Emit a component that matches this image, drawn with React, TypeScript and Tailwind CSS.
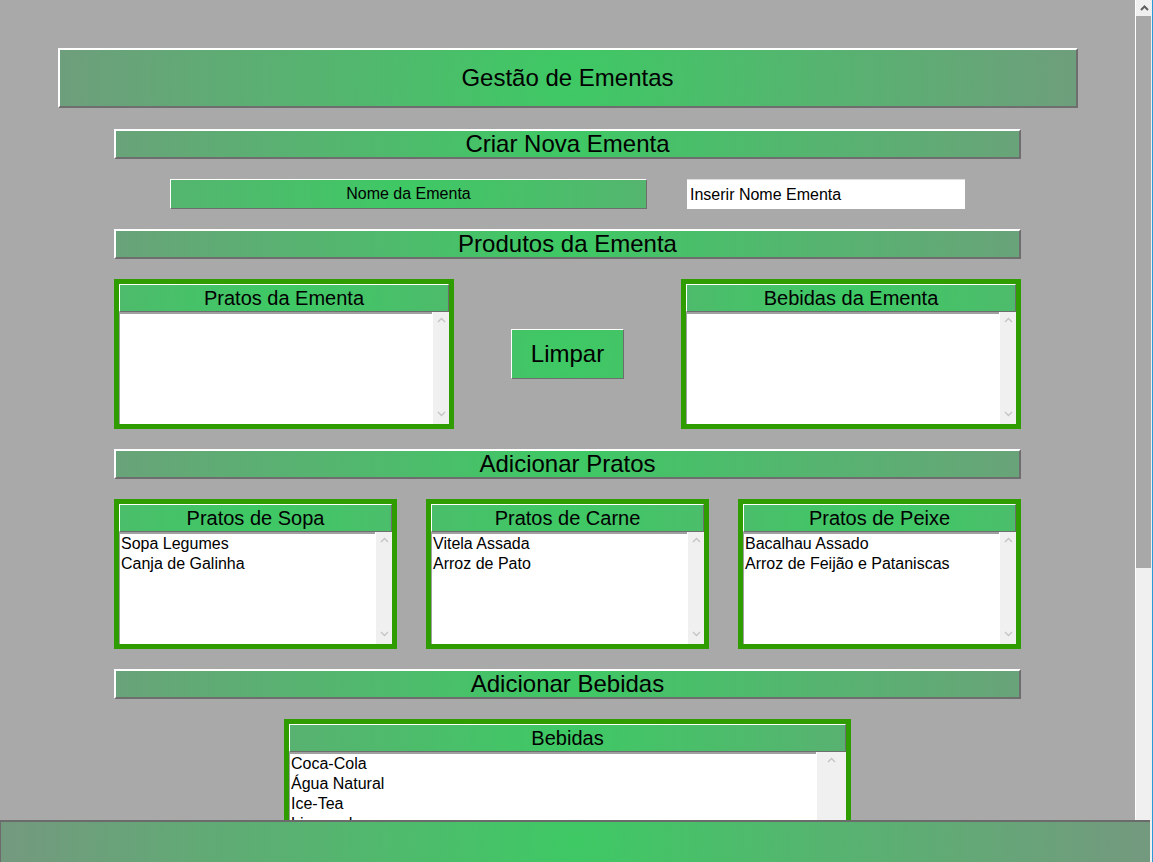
import React from "react";

const GRAD = "bg-[image:radial-gradient(circle_at_center,#3ec964_0px,#739a7e_560px)]";
const OUT2 = "border-2 border-t-white border-l-white border-r-[#6e6e6e] border-b-[#6e6e6e]";
const OUT1 = "border border-t-white border-l-white border-r-[#6e6e6e] border-b-[#6e6e6e]";

function Chevron({ up, color, sw }: { up: boolean; color: string; sw: number }) {
  return (
    <svg width="9" height="6" viewBox="0 0 9 6">
      <polyline
        points={up ? "1,5 4.5,1.5 8,5" : "1,1 4.5,4.5 8,1"}
        fill="none"
        stroke={color}
        strokeWidth={sw}
      />
    </svg>
  );
}

function SectionHeader({ children }: { children: React.ReactNode }) {
  return (
    <div className={`w-[907px] h-[30px] shrink-0 ${GRAD} ${OUT2} flex items-center justify-center text-[24px] text-black`}>
      {children}
    </div>
  );
}

function ListBox({
  title,
  items,
  widthClass,
  barClass = "w-[17px]",
}: {
  title: string;
  items: string[];
  widthClass: string;
  barClass?: string;
}) {
  return (
    <div className={`${widthClass} h-[150px] shrink-0 border-[5px] border-[#2f9d00] bg-white flex flex-col`}>
      <div className={`h-[28px] shrink-0 ${GRAD} ${OUT1} flex items-center justify-center text-[20px] text-black`}>
        {title}
      </div>
      <div className="flex-1 flex min-h-0">
        <div className="flex-1 border-t-2 border-l border-t-[#a0a0a0] border-l-[#a0a0a0] pl-px text-[16px] leading-[20px] text-black overflow-hidden">
          {items.map((it) => (
            <div key={it} className="whitespace-nowrap">{it}</div>
          ))}
        </div>
        <div className={`${barClass} bg-[#f0f0f0] border-l border-white flex flex-col justify-between items-center pt-[5px] pb-[7px]`}>
          <Chevron up color="#c4c4c4" sw={1.3} />
          <Chevron up={false} color="#c4c4c4" sw={1.3} />
        </div>
      </div>
    </div>
  );
}

export default function App() {
  return (
    <div className="w-[1153px] h-[862px] relative overflow-hidden bg-[#a9a9a9] flex font-['Liberation_Sans',Arial,sans-serif]">
      <main className="w-[1135px] shrink-0 flex flex-col items-center pt-[48px] gap-[20px]">
        <div className={`w-[1020px] h-[60px] mb-px shrink-0 ${GRAD} ${OUT2} flex items-center justify-center text-[24px] text-black`}>
          Gestão de Ementas
        </div>
        <SectionHeader>Criar Nova Ementa</SectionHeader>
        <div className="flex items-center gap-[40px] h-[30px] shrink-0">
          <div className={`w-[477px] h-[30px] ${GRAD} ${OUT1} flex items-center justify-center text-[16px] text-black`}>
            Nome da Ementa
          </div>
          <div className="w-[278px] h-[30px] bg-white border-t border-[#dcdcdc] flex items-center pl-[3px] text-[16px] text-black">
            Inserir Nome Ementa
          </div>
        </div>
        <SectionHeader>Produtos da Ementa</SectionHeader>
        <div className="flex items-center gap-[57px] shrink-0">
          <ListBox title="Pratos da Ementa" items={[]} widthClass="w-[340px]" />
          <div className={`w-[113px] h-[50px] ${GRAD} ${OUT1} flex items-center justify-center text-[24px] text-black`}>
            Limpar
          </div>
          <ListBox title="Bebidas da Ementa" items={[]} widthClass="w-[340px]" />
        </div>
        <SectionHeader>Adicionar Pratos</SectionHeader>
        <div className="flex gap-[29px] shrink-0">
          <ListBox title="Pratos de Sopa" items={["Sopa Legumes", "Canja de Galinha"]} widthClass="w-[283px]" />
          <ListBox title="Pratos de Carne" items={["Vitela Assada", "Arroz de Pato"]} widthClass="w-[283px]" />
          <ListBox title="Pratos de Peixe" items={["Bacalhau Assado", "Arroz de Feijão e Pataniscas"]} widthClass="w-[283px]" />
        </div>
        <SectionHeader>Adicionar Bebidas</SectionHeader>
        <ListBox
          title="Bebidas"
          items={["Coca-Cola", "Água Natural", "Ice-Tea", "Limonada", "Sumo de Laranja"]}
          widthClass="w-[567px]"
          barClass="w-[30px]"
        />
      </main>
      <div className="w-px shrink-0 bg-white" />
      <div className="w-[16px] shrink-0 bg-[#f0f0f0] flex flex-col">
        <div className="h-[16px] flex items-center justify-center">
          <Chevron up color="#606060" sw={2} />
        </div>
        <div className="w-[15px] h-[552px] bg-[#a8a8a8]" />
      </div>
      <div className="w-px shrink-0 bg-[#2b9ad6]" />
      <footer className={`absolute left-0 bottom-0 w-[1150px] h-[42px] ${GRAD} border-t-2 border-l border-[#6b6b6b]`} />
    </div>
  );
}
